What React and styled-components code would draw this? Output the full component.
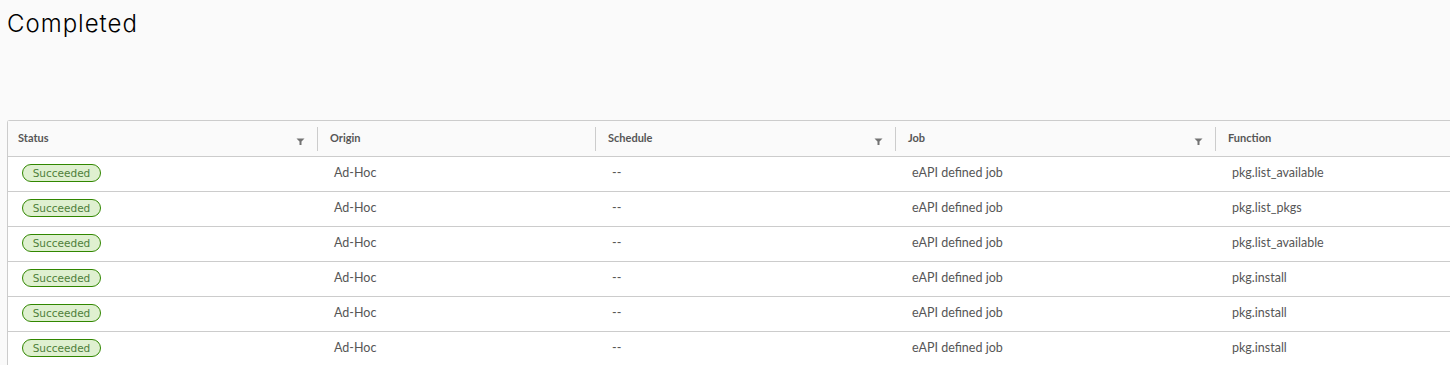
import React from "react";
import styled, { createGlobalStyle } from "styled-components";

const GlobalStyle = createGlobalStyle`
  body {
    margin: 0;
    background: #fafafa;
    overflow: hidden;
    font-family: Lato, "Noto Sans", sans-serif;
  }
`;

const columns = [
  { key: "status", label: "Status", filter: true },
  { key: "origin", label: "Origin" },
  { key: "schedule", label: "Schedule", filter: true },
  { key: "job", label: "Job", filter: true },
  { key: "fn", label: "Function" },
];

const rows = [
  { origin: "Ad-Hoc", schedule: "--", job: "eAPI defined job", fn: "pkg.list_available" },
  { origin: "Ad-Hoc", schedule: "--", job: "eAPI defined job", fn: "pkg.list_pkgs" },
  { origin: "Ad-Hoc", schedule: "--", job: "eAPI defined job", fn: "pkg.list_available" },
  { origin: "Ad-Hoc", schedule: "--", job: "eAPI defined job", fn: "pkg.install" },
  { origin: "Ad-Hoc", schedule: "--", job: "eAPI defined job", fn: "pkg.install" },
  { origin: "Ad-Hoc", schedule: "--", job: "eAPI defined job", fn: "pkg.install" },
];

const FilterIcon = () => (
  <svg width="9" height="9" viewBox="0 0 9 9">
    <path d="M0.5 1.5 H8.5 L5.5 4.5 V8 H3.5 V4.5 Z" fill="#737373" />
  </svg>
);

const App = () => (
  <>
    <GlobalStyle />
    <Page>
      <Title>Completed</Title>
      <Grid>
        <HeaderRow>
          {columns.map((col, i) => (
            <HeaderCell key={col.key} $first={i === 0}>
              <span>{col.label}</span>
              {col.filter && <FilterIcon />}
              {i < columns.length - 1 && <Separator />}
            </HeaderCell>
          ))}
        </HeaderRow>
        {rows.map((row, i) => (
          <Row key={i}>
            <Cell $first>
              <Badge>Succeeded</Badge>
            </Cell>
            <Cell>{row.origin}</Cell>
            <Cell>{row.schedule}</Cell>
            <Cell>{row.job}</Cell>
            <Cell>{row.fn}</Cell>
          </Row>
        ))}
      </Grid>
    </Page>
  </>
);

export default App;

const Page = styled.div`
  padding: 0 0 0 7px;
  width: 1500px;
  height: 365px;
  overflow: hidden;
`;

const Title = styled.h1`
  margin: 0;
  padding-top: 10px;
  height: 120px;
  box-sizing: border-box;
  font-family: Inter, Lato, sans-serif;
  font-size: 24px;
  line-height: 28px;
  font-weight: 300;
  color: #000;
  letter-spacing: 1px;
`;

const Grid = styled.div`
  border: 1px solid #cccccc;
  border-right: none;
  border-radius: 3px 0 0 0;
  width: 1480px;
  background: #fff;
`;

const rowColumns = "310px 278px 300px 320px 1fr";

const HeaderRow = styled.div`
  display: grid;
  grid-template-columns: ${rowColumns};
  height: 35px;
  background: #fafafa;
  border-bottom: 1px solid #cccccc;
`;

const HeaderCell = styled.div`
  position: relative;
  display: flex;
  align-items: center;
  justify-content: space-between;
  padding: 0 13px 2px ${(p) => (p.$first ? "10px" : "12px")};
  font-size: 11px;
  font-weight: 700;
  color: #565656;

  svg {
    margin-top: 7px;
  }
`;

const Separator = styled.div`
  position: absolute;
  right: 0;
  top: 6px;
  bottom: 5px;
  width: 1px;
  background: #cccccc;
`;

const Row = styled.div`
  display: grid;
  grid-template-columns: ${rowColumns};
  height: 34px;
  border-bottom: 1px solid #cccccc;
`;

const Cell = styled.div`
  display: flex;
  align-items: center;
  padding: 0 0 3px ${(p) => (p.$first ? "14px" : "16px")};
  font-size: 12.5px;
  color: #565656;
`;

const Badge = styled.span`
  display: inline-flex;
  align-items: center;
  justify-content: center;
  width: 79px;
  height: 18px;
  box-sizing: border-box;
  border: 1px solid #318700;
  border-radius: 9px;
  background: #dff0d0;
  color: #4e7f3a;
  font-family: "DejaVu Sans", Verdana, sans-serif;
  font-size: 10.5px;
`;
